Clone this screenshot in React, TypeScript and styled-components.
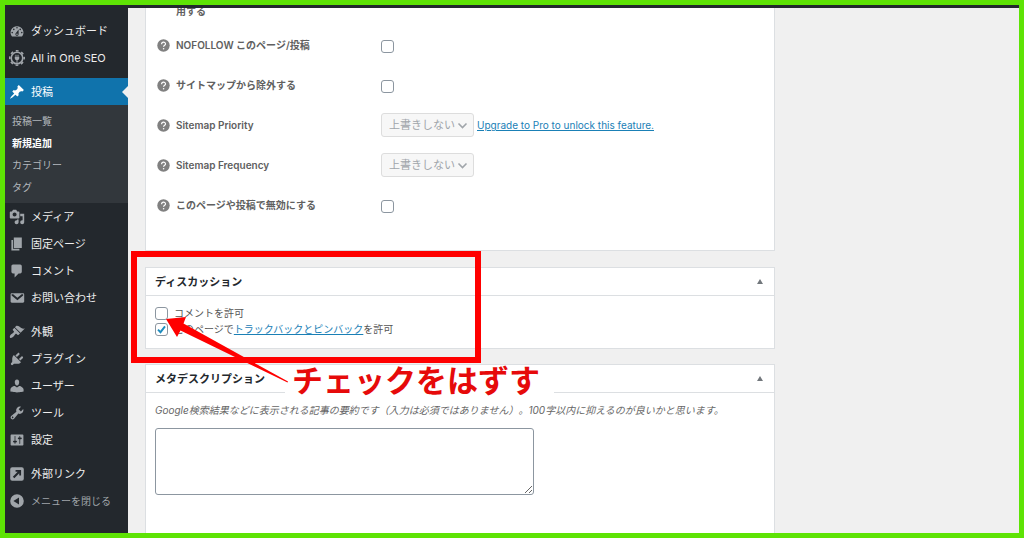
import React from 'react';
import styled, { createGlobalStyle, css } from 'styled-components';

const GlobalStyle = createGlobalStyle`
  *, *::before, *::after { box-sizing: border-box; }
  body {
    margin: 0;
    font-family: Inter, 'Noto Sans CJK JP', sans-serif;
    font-size: 10px;
    line-height: 16px;
    color: #555;
  }
  button, select, textarea, input { font: inherit; }
`;

const Frame = styled.div`
  display: flex;
  flex-direction: column;
  height: 100vh;
  overflow: hidden;
  border: 5px solid #5ee305;
  background: #f0f0f0;
`;

const AdminBar = styled.header`
  flex: none;
  height: 3px;
  background: #23282d;
`;

const Layout = styled.div`
  display: flex;
  flex: 1;
  min-height: 0;
  overflow: hidden;
`;

const Sidebar = styled.nav`
  flex: none;
  width: 123px;
  padding-top: 9px;
  background: #23282d;
`;

const MenuGroup = styled.ul`
  list-style: none;
  margin: 0 0 7px;
  padding: 0;
`;

const itemStyle = css<{ $active?: boolean; $muted?: boolean }>`
  position: relative;
  display: flex;
  align-items: center;
  gap: 6px;
  width: 100%;
  height: 27px;
  padding: 0 0 0 4px;
  border: 0;
  background: ${p => (p.$active ? '#1073ac' : 'transparent')};
  color: ${p => (p.$active ? '#fff' : p.$muted ? '#a0a5aa' : '#eee')};
  font-size: ${p => (p.$muted ? '10px' : '11px')};
  text-align: left;
  text-decoration: none;
  white-space: nowrap;

  svg {
    flex: none;
    width: 16px;
    height: 16px;
    fill: ${p => (p.$active ? '#fff' : '#a0a5aa')};
  }
`;

const MenuLink = styled.a<{ $active?: boolean; $muted?: boolean }>`
  ${itemStyle}
  ${p => p.$active && css`
    &::after {
      content: '';
      position: absolute;
      right: 0;
      border: 6px solid transparent;
      border-right-color: #f0f0f0;
      border-left: 0;
    }
  `}
`;

const CollapseButton = styled.button<{ $active?: boolean; $muted?: boolean }>`
  ${itemStyle}
`;

const SubMenu = styled.ul`
  list-style: none;
  margin: 0;
  padding: 5px 0;
  background: #32373c;
`;

const SubLink = styled.a<{ $current?: boolean }>`
  display: block;
  padding-left: 7px;
  line-height: 22px;
  color: ${p => (p.$current ? '#fff' : '#b4b9be')};
  font-weight: ${p => (p.$current ? 600 : 400)};
  text-decoration: none;
`;

const Main = styled.main`
  flex: 1;
  min-width: 0;
  padding: 0 244px 0 17px;
`;

const Panel = styled.section`
  position: relative;
  margin-bottom: 15px;
  border: 1px solid #dcdfe2;
  background: #fff;
`;

const SeoPanel = styled(Panel)`
  margin-top: -5px;
  padding-bottom: 25px;
  border-top: 0;
  margin-bottom: 16px;
`;

const ContinuedLabel = styled.div`
  padding: 0 0 6px 30px;
  color: #606060;
  font-weight: 600;
`;

const SettingRow = styled.div`
  display: grid;
  grid-template-columns: 217px 1fr;
  padding: 0 0 0 11px;
  height: 40px;
  align-items: center;
`;

const SettingLabel = styled.div`
  display: flex;
  align-items: center;
  gap: 6px;
  color: #606060;
  font-weight: 600;

  svg { width: 13px; height: 13px; flex: none; }
`;

const SettingControl = styled.div`
  display: flex;
  align-items: center;
  gap: 3px;
  padding-left: 7px;
`;

const CheckBox = styled.input.attrs({ type: 'checkbox' })<{ $low?: boolean }>`
  appearance: none;
  flex: none;
  width: 13px;
  height: 13px;
  margin: ${p => (p.$low ? '3px 0 0' : '0')};
  border: 1px solid #8c96a0;
  border-radius: 3px;
  background: #fff center / 11px 11px no-repeat;

  &:checked {
    background-image: url("data:image/svg+xml,%3Csvg xmlns='http://www.w3.org/2000/svg' viewBox='0 0 11 11'%3E%3Cpath d='M2 5.6 4.5 8.2 9 2.4' fill='none' stroke='%231e8cbe' stroke-width='1.9'/%3E%3C/svg%3E");
  }
`;

const Select = styled.select`
  appearance: none;
  width: 93px;
  height: 24px;
  padding: 0 12px 0 7px;
  border: 1px solid #ddd;
  border-radius: 3px;
  background: #f7f7f7 right 5px center / 11px 11px no-repeat
    url("data:image/svg+xml,%3Csvg xmlns='http://www.w3.org/2000/svg' viewBox='0 0 11 11'%3E%3Cpath d='M1.5 3.5 5.5 7.5 9.5 3.5' fill='none' stroke='%23a0a5aa' stroke-width='1.6'/%3E%3C/svg%3E");
  color: #a0a5aa;
  font-size: 11px;

  &:disabled { opacity: 1; }
`;

const TextLink = styled.a`
  color: #1a80b6;
  text-decoration: underline;
`;

const PanelHeader = styled.header`
  display: flex;
  align-items: center;
  justify-content: space-between;
  height: 28px;
  padding: 0 9px;
  border-bottom: 1px solid #dcdfe2;
`;

const PanelTitle = styled.h2`
  margin: 0;
  color: #23282d;
  font-size: 11px;
  font-weight: 600;
`;

const ToggleButton = styled.button`
  display: flex;
  padding: 2px;
  border: 0;
  background: none;

  svg { width: 6px; height: 5px; fill: #72777c; }
`;

const PanelBody = styled.div`
  padding: 9px;
`;

const CheckLine = styled.label`
  display: flex;
  align-items: center;
  gap: 6px;
  line-height: 15px;
  white-space: nowrap;
`;

const Options = styled.div`
  display: grid;
  gap: 1px;
  padding: 1px 0 2px;
`;

const Description = styled.label`
  display: block;
  margin-bottom: 10px;
  color: #666;
  font-style: italic;
  white-space: nowrap;
  text-spacing-trim: space-all;
`;

const TextArea = styled.textarea`
  display: block;
  width: 379px;
  height: 67px;
  margin-bottom: 60px;
  border: 1px solid #8c96a0;
  border-radius: 3px;
  background: #fff;
`;

const Highlight = styled.div`
  position: absolute;
  z-index: 1;
  top: -17px;
  left: -15px;
  width: 350px;
  height: 112px;
  border: 6px solid #f00;
  pointer-events: none;
`;

const Arrow = styled.svg`
  position: absolute;
  z-index: 2;
  top: 49px;
  left: 19px;
  width: 124px;
  height: 68px;
  pointer-events: none;
`;

const Note = styled.p`
  position: absolute;
  z-index: 1;
  top: 98px;
  left: 139px;
  margin: 0;
  padding: 0 14px 0 7px;
  background: #fff;
  color: #e60a0a;
  font-size: 31px;
  font-weight: 700;
  line-height: 29px;
  white-space: nowrap;
`;

const paths = {
  dashboard: 'M3.76 17h12.48A7.998 7.998 0 0 0 10 4a7.998 7.998 0 0 0-6.24 13zM10 5c.55 0 1 .45 1 1s-.45 1-1 1-1-.45-1-1 .45-1 1-1zM6 7c.55 0 1 .45 1 1s-.45 1-1 1-1-.45-1-1 .45-1 1-1zm8 0c.55 0 1 .45 1 1s-.45 1-1 1-1-.45-1-1 .45-1 1-1zm-5.37 5.55L12 8v6c0 1.1-.9 2-2 2s-2-.9-2-2c0-.57.24-1.08.63-1.45zM4 11c.55 0 1 .45 1 1s-.45 1-1 1-1-.45-1-1 .45-1 1-1zm12 0c.55 0 1 .45 1 1s-.45 1-1 1-1-.45-1-1 .45-1 1-1zm-5 3c0-.55-.45-1-1-1s-1 .45-1 1 .45 1 1 1 1-.45 1-1z',
  pin: 'M10.44 3.02l1.82-1.82 6.36 6.35-1.83 1.82c-1.05-.68-2.48-.57-3.41.36l-.75.75c-.92.93-1.04 2.35-.35 3.41l-1.83 1.82-2.41-2.41-2.8 2.79c-.42.42-3.38 2.71-3.8 2.29s1.86-3.39 2.28-3.81l2.79-2.79L4.1 9.36l1.83-1.82c1.05.69 2.48.57 3.4-.36l.75-.75c.93-.92 1.05-2.35.36-3.41z',
  media: 'M13 11V4c0-.55-.45-1-1-1h-1.67L9 1H5L3.67 3H2c-.55 0-1 .45-1 1v7c0 .55.45 1 1 1h10c.55 0 1-.45 1-1zM7 4.5c1.38 0 2.5 1.12 2.5 2.5S8.38 9.5 7 9.5 4.5 8.38 4.5 7 5.62 4.5 7 4.5zM14 6h5v10.5c0 1.38-1.12 2.5-2.5 2.5S14 17.88 14 16.5s1.12-2.5 2.5-2.5c.17 0 .34.02.5.05V9h-3V6zm-4 8.05V13h2v3.5c0 1.38-1.12 2.5-2.5 2.5S7 17.88 7 16.5 8.12 14 9.5 14c.17 0 .34.02.5.05z',
  page: 'M6 15V2h10v13H6zm-1 1h8v2H3V5h2v11z',
  comment: 'M5 2h9c1.1 0 2 .9 2 2v7c0 1.1-.9 2-2 2h-2l-5 5v-5H5c-1.1 0-2-.9-2-2V4c0-1.1.9-2 2-2z',
  mail: 'M19 14.5v-9c0-.83-.67-1.5-1.5-1.5H3.49c-.83 0-1.5.67-1.5 1.5v9c0 .83.67 1.5 1.5 1.5H17.5c.83 0 1.5-.67 1.5-1.5zM5.200 5.200L10.500 9.600l5.300-4.400h1.900v1.600l-7.200 6-7.200-6V5.200z',
  brush: 'M14.48 11.06L7.41 3.99l1.5-1.5c.5-.56 2.3-.47 3.51.32 1.21.8 1.43 1.28 2.91 2.1 1.18.64 2.45 1.26 4.45.85zm-.71.71L6.7 4.7 4.93 6.47c-.39.39-.39 1.02 0 1.41l1.06 1.06c.39.39.39 1.03 0 1.42-.6.6-1.43 1.11-2.21 1.69-.35.26-.7.53-1.01.84C1.43 14.23.4 16.08 1.4 17.07c.99 1 2.84-.03 4.18-1.36.31-.31.58-.66.85-1.02.57-.78 1.08-1.61 1.69-2.21.39-.39 1.02-.39 1.41 0l1.06 1.06c.39.39 1.02.39 1.41 0z',
  plug: 'M13.11 4.36L9.87 7.6 8 5.73l3.24-3.24c.35-.34 1.05-.2 1.56.32.52.51.66 1.21.31 1.55zm-8 1.77l.91-1.12 9.01 9.01-1.19.84c-.71.71-2.63 1.16-3.82 1.16H6.14L4.9 17.26c-.59.59-1.54.59-2.12 0-.59-.58-.59-1.53 0-2.12l1.24-1.24v-3.88c0-1.13.4-3.19 1.09-3.89zm7.26 3.97l3.24-3.24c.34-.35 1.04-.21 1.55.31.52.51.66 1.21.31 1.55l-3.24 3.25z',
  user: 'M10 9.25c-2.27 0-2.73-3.44-2.73-3.44C7 4.02 7.82 2 9.97 2c2.16 0 2.98 2.02 2.71 3.81 0 0-.41 3.44-2.68 3.44zm0 2.57L12.72 10c2.39 0 5.520 2.33 5.520 4.53v2.49s-4.650 1.13-8.240 1.13c-3.65 0-8.240-1.13-8.240-1.13v-2.49c0-2.25 2.940-4.48 5.470-4.48z',
  wrench: 'M16.68 9.77c-1.34 1.34-3.3 1.67-4.95.99l-5.41 6.52c-.99.99-2.59.99-3.58 0s-.99-2.59 0-3.57l6.52-5.42c-.68-1.65-.35-3.61.99-4.95 1.28-1.28 3.12-1.62 4.72-1.06l-2.89 2.89 2.82 2.82 2.86-2.87c.53 1.58.18 3.39-1.08 4.65zM3.81 16.21c.4.39 1.04.39 1.43 0 .4-.4.4-1.04 0-1.43-.39-.4-1.03-.4-1.43 0-.39.39-.39 1.03 0 1.43z',
  sliders: 'M18 16V4c0-.55-.45-1-1-1H3c-.55 0-1 .45-1 1v12c0 .55.45 1 1 1h14c.55 0 1-.45 1-1zM8 11h1c.55 0 1 .45 1 1s-.45 1-1 1H8v1.5c0 .28-.22.5-.5.5s-.5-.22-.5-.5V13H6c-.55 0-1-.45-1-1s.45-1 1-1h1V5.5c0-.28.22-.5.5-.5s.5.22.5.5V11zm5-2h-1c-.55 0-1-.45-1-1s.45-1 1-1h1V5.5c0-.28.22-.5.5-.5s.5.22.5.5V7h1c.55 0 1 .45 1 1s-.45 1-1 1h-1v5.5c0 .28-.22.5-.5.5s-.5-.22-.5-.5V9z',
  external: 'M4 1.5h12A2.5 2.5 0 0 1 18.500 4v12a2.500 2.500 0 0 1-2.500 2.500H4A2.500 2.500 0 0 1 1.500 16V4A2.500 2.500 0 0 1 4 1.500zM8.200 5v2.300h2.700L4.800 13.400l1.900 1.900 6.100-6.100v2.700H15.100V5z',
  collapse: 'M10 1.500a8.500 8.500 0 1 0 0 17 8.500 8.500 0 0 0 0-17zM12.500 5.500v9L5.500 10z',
};

type IconName = keyof typeof paths;

const Icon = ({ name }: { name: IconName }) => (
  <svg viewBox="0 0 20 20" aria-hidden="true">
    <path fillRule="evenodd" d={paths[name]} />
  </svg>
);

const GearIcon = () => (
  <svg viewBox="0 0 20 20" aria-hidden="true">
    <g stroke="#a0a5aa" fill="none">
      <circle cx="10" cy="10" r="7.200" strokeWidth="2" />
      <circle cx="10" cy="10" r="9" strokeWidth="2" strokeDasharray="3.534 3.534" strokeDashoffset="1.767" />
      <path d="M8.700 6v2.500M11.300 6v2.500M10 12v4.500" strokeWidth="1.200" />
    </g>
    <path d="M7.200 8.400h5.600v2c0 1.500-1.200 2.500-2.800 2.500s-2.800-1-2.800-2.500z" />
  </svg>
);

const HelpIcon = () => (
  <svg viewBox="0 0 13 13" aria-hidden="true">
    <circle cx="6.500" cy="6.500" r="6.200" fill="#808080" />
    <path d="M4.600 5.200c0-2.700 3.900-2.500 3.900-.3 0 1.400-1.900 1.300-1.900 2.900" fill="none" stroke="#fff" strokeWidth="1.200" />
    <circle cx="6.600" cy="9.700" r=".8" fill="#fff" />
  </svg>
);

const Item = ({ icon, children, active }: { icon: IconName; children: React.ReactNode; active?: boolean }) => (
  <MenuLink href="#" $active={active}>
    <Icon name={icon} />
    {children}
  </MenuLink>
);

const Header = ({ title }: { title: string }) => (
  <PanelHeader>
    <PanelTitle>{title}</PanelTitle>
    <ToggleButton type="button" aria-label={`${title} パネルを切り替え`}>
      <svg viewBox="0 0 6 5" aria-hidden="true"><path d="M3 0l3 5H0z" /></svg>
    </ToggleButton>
  </PanelHeader>
);

const Setting = ({ id, label, children }: { id: string; label: string; children: React.ReactNode }) => (
  <SettingRow>
    <SettingLabel>
      <HelpIcon />
      <label htmlFor={id}>{label}</label>
    </SettingLabel>
    <SettingControl>{children}</SettingControl>
  </SettingRow>
);

export default function App() {
  return (
    <>
      <GlobalStyle />
      <Frame>
        <AdminBar />
        <Layout>
          <Sidebar>
            <MenuGroup>
              <li><Item icon="dashboard">ダッシュボード</Item></li>
              <li><MenuLink href="#"><GearIcon />All in One SEO</MenuLink></li>
            </MenuGroup>
            <MenuGroup>
              <li>
                <Item icon="pin" active>投稿</Item>
                <SubMenu>
                  <li><SubLink href="#">投稿一覧</SubLink></li>
                  <li><SubLink href="#" $current>新規追加</SubLink></li>
                  <li><SubLink href="#">カテゴリー</SubLink></li>
                  <li><SubLink href="#">タグ</SubLink></li>
                </SubMenu>
              </li>
              <li><Item icon="media">メディア</Item></li>
              <li><Item icon="page">固定ページ</Item></li>
              <li><Item icon="comment">コメント</Item></li>
              <li><Item icon="mail">お問い合わせ</Item></li>
            </MenuGroup>
            <MenuGroup>
              <li><Item icon="brush">外観</Item></li>
              <li><Item icon="plug">プラグイン</Item></li>
              <li><Item icon="user">ユーザー</Item></li>
              <li><Item icon="wrench">ツール</Item></li>
              <li><Item icon="sliders">設定</Item></li>
            </MenuGroup>
            <MenuGroup>
              <li><Item icon="external">外部リンク</Item></li>
              <li>
                <CollapseButton type="button" $muted><Icon name="collapse" />メニューを閉じる</CollapseButton>
              </li>
            </MenuGroup>
          </Sidebar>

          <Main>
            <SeoPanel>
              <ContinuedLabel>用する</ContinuedLabel>
              <Setting id="nofollow" label="NOFOLLOW このページ/投稿"><CheckBox id="nofollow" $low /></Setting>
              <Setting id="exclude" label="サイトマップから除外する"><CheckBox id="exclude" $low /></Setting>
              <Setting id="priority" label="Sitemap Priority">
                <Select id="priority" disabled><option>上書きしない</option></Select>
                <TextLink href="#">Upgrade to Pro to unlock this feature.</TextLink>
              </Setting>
              <Setting id="frequency" label="Sitemap Frequency">
                <Select id="frequency" disabled><option>上書きしない</option></Select>
              </Setting>
              <Setting id="disable" label="このページや投稿で無効にする"><CheckBox id="disable" $low /></Setting>
            </SeoPanel>

            <Panel>
              <Header title="ディスカッション" />
              <PanelBody>
                <Options>
                  <CheckLine><CheckBox />コメントを許可</CheckLine>
                  <CheckLine>
                    <CheckBox defaultChecked />
                    <span>このページで<TextLink href="#">トラックバックとピンバック</TextLink>を許可</span>
                  </CheckLine>
                </Options>
              </PanelBody>
              <Highlight />
              <Arrow viewBox="0 0 124 68" aria-hidden="true">
                <path d="M1 2l20-2-2.500 6.500L123 64.500l-.5 1L15.500 13.500 12 20z" fill="#f00" />
              </Arrow>
              <Note>チェックをはずす</Note>
            </Panel>

            <Panel>
              <Header title="メタデスクリプション" />
              <PanelBody>
                <Description htmlFor="description">
                  Google検索結果などに表示される記事の要約です（入力は必須ではありません）。100字以内に抑えるのが良いかと思います。
                </Description>
                <TextArea id="description" />
              </PanelBody>
            </Panel>
          </Main>
        </Layout>
      </Frame>
    </>
  );
}
